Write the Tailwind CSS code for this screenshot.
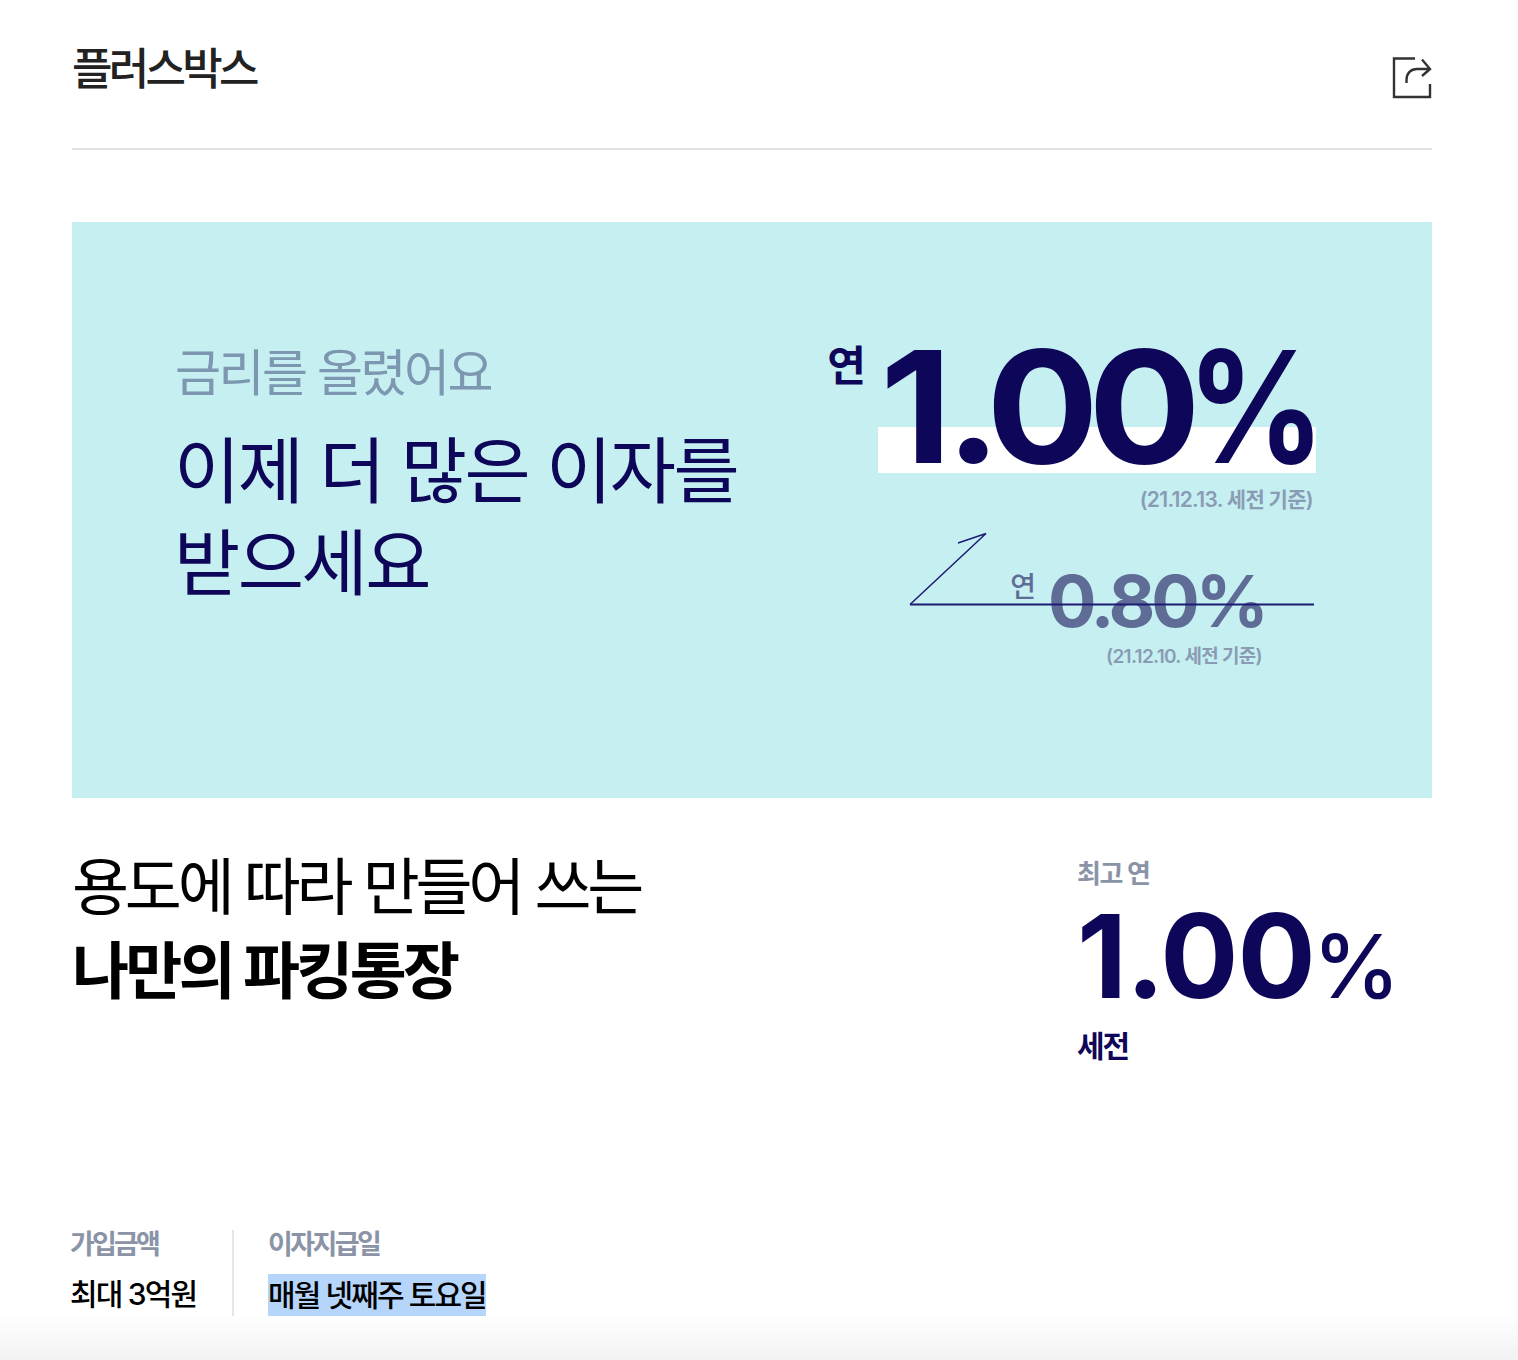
<!DOCTYPE html>
<html lang="ko"><head><meta charset="utf-8">
<script src="https://cdn.jsdelivr.net/npm/@tailwindcss/browser@4"></script>
<title>플러스박스</title></head>
<body class="bg-white font-['Inter','Noto_Sans_CJK_KR',sans-serif] text-black">
<div class="relative h-[1360px] w-[1518px] overflow-hidden pr-[86px] pl-[72px]">
  <header class="flex h-[150px] items-start justify-between border-b-2 border-[#e1e1e1]">
    <h1 class="mt-[41px] text-[44px] leading-[56px] font-medium tracking-[-3.7px] text-[#222]">플러스박스</h1>
    <svg class="mt-[56px]" width="40" height="44" viewBox="0 0 40 44" fill="none" stroke="#333" stroke-width="2.400">
      <path d="M23 2.500H2V41H38V28"/><path d="M14.500 27V24C14.500 17 19 13 25 13H37"/><path d="M30 3.500L38 13L30 20"/>
    </svg>
  </header>
  <section class="relative mt-[72px] flex h-[576px] justify-between bg-[#c5eff1] pt-[122px] pr-[116px] pl-[103px]">
    <div>
      <p class="text-[50px] leading-[58px] tracking-[-2.5px] text-[#7d97b0]">금리를 올렸어요</p>
      <p class="mt-[23px] ml-[-1px] text-[72px] leading-[92px] tracking-[-2.500px] text-[#0e0759]">이제 더 많은 이자를<br>받으세요</p>
    </div>
    <div class="flex flex-col items-end">
      <div class="relative flex items-start">
        <span class="mt-[-4px] mr-[12px] text-[42px] leading-[52px] font-bold text-[#0e0759]">연</span>
        <span class="relative h-[130px] w-[438px]">
          <span class="absolute right-0 bottom-[1px] left-0 h-[46px] bg-white"></span>
          <span class="absolute top-[-2px] left-[2px] flex text-[156px] leading-[130px] font-bold whitespace-nowrap text-[#0e0759]">
            <span class="inline-block w-[307px] origin-left scale-x-[1.07]"><span class="tracking-[-6px]">1</span><span class="tracking-[-14px]">.</span><span class="tracking-[-10px]">00</span></span>
            <span class="inline-block origin-left scale-x-[0.87] tracking-[-8px]">%</span>
          </span>
        </span>
      </div>
      <p class="mt-[12px] mr-[3px] text-[21px] leading-[28px] font-semibold tracking-[-0.7px] text-[#8a9cb4]">(21.12.13. 세전 기준)</p>
      <div class="relative mt-[48px] mr-[51px] flex items-end">
        <span class="mr-[12px] mb-[35px] text-[28px] leading-[36px] font-medium text-[#5f6d96]">연</span>
        <span class="text-[72px] leading-[78px] font-bold tracking-[-4px] text-[#5f6d96]">0.80%</span>
      </div>
      <p class="mt-[4px] mr-[54px] text-[19px] leading-[26px] font-semibold tracking-[-0.7px] text-[#8a9cb4]">(21.12.10. 세전 기준)</p>
    </div>
    <svg class="absolute top-[310px] left-[836px]" width="408" height="76" viewBox="0 0 408 76" fill="none" stroke="#1d1b74">
      <path stroke-width="2" d="M2 72.500H406"/><path stroke-width="1.500" d="M2 72.500L78 1.500L50 11"/>
    </svg>
  </section>
  <section class="mt-[48px] flex h-[290px] items-start justify-between">
    <h2 class="text-[62px] leading-[84px] font-normal tracking-[-4.200px]">용도에 따라 만들어 쓰는<br><strong class="font-bold tracking-[-3.700px]">나만의 파킹통장</strong></h2>
    <div class="w-[355px]">
      <p class="mt-[10px] text-[26px] leading-[36px] font-semibold tracking-[-1.5px] text-[#8a94a6]">최고 연</p>
      <p class="mt-[8px] flex items-baseline text-[#0e0759]"><span class="text-[116px] leading-[112px] font-bold tracking-[-1px]">1.00</span><span class="ml-[-2px] text-[88px] leading-[112px] font-medium">%</span></p>
      <p class="mt-[4px] text-[30px] leading-[40px] font-semibold tracking-[-2px] text-[#0e0759]">세전</p>
    </div>
  </section>
  <section class="mt-[94px] flex">
    <div class="w-[162px] border-r-2 border-[#e6e6e6]">
      <p class="ml-[-2px] text-[27px] leading-[30px] font-semibold tracking-[-2.800px] text-[#8a94a6]">가입금액</p>
      <p class="mt-[16px] ml-[-2px] text-[30px] leading-[36px] font-medium tracking-[-1.800px]">최대 3억원</p>
    </div>
    <div class="pl-[34px]">
      <p class="text-[27px] leading-[30px] font-semibold tracking-[-2.600px] text-[#8a94a6]">이자지급일</p>
      <p class="mt-[14px] bg-[#b6d5fb] text-[30px] leading-[42px] font-medium tracking-[-1.900px]">매월 넷째주 토요일</p>
    </div>
  </section>
  <div class="absolute right-0 bottom-0 left-0 h-[46px] bg-gradient-to-b from-white/0 to-[#f2f2f2]"></div>
</div>
</body></html>
